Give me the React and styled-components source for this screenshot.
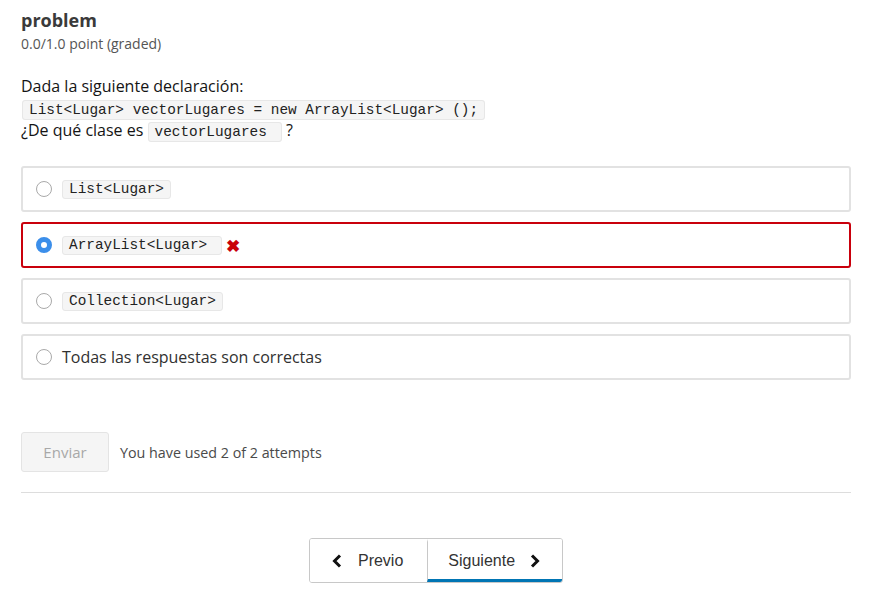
import React from "react";
import styled, { createGlobalStyle } from "styled-components";

const Global = createGlobalStyle`
  html, body { margin: 0; padding: 0; background: #fff; }
  body { font-family: "Open Sans", "Liberation Sans", sans-serif; color: #313131; }
  * { box-sizing: border-box; }
`;

const Page = styled.div`
  padding: 8px 19px 0 21px;
  width: 870px;
`;

const Title = styled.h3`
  margin: 0;
  font-size: 18px;
  font-weight: 700;
  line-height: 24px;
  color: #3a3a3a;
`;

const Score = styled.div`
  font-size: 14px;
  line-height: 18px;
  color: #555;
  margin-top: 3px;
`;

const Prompt = styled.div`
  margin-top: 22px;
  font-size: 16px;
  line-height: 22px;
  color: #141414;
`;

const Code = styled.code`
  font-family: "Liberation Mono", "Courier New", monospace;
  font-size: 14.4px;
  line-height: 15px;
  background: #f5f5f5;
  border: 1px solid #e7e7e7;
  border-radius: 3px;
  padding: 1px ${p => p.$pr || 6}px 1px 6px;
  color: #222;
  white-space: pre;
`;

const CodeLine = styled.div`
  line-height: 17px;
  margin: 3px 0 1px 1px;
`;

const Options = styled.div`
  margin-top: 25px;
  display: flex;
  flex-direction: column;
  gap: 10px;
  width: 830px;
`;

const Option = styled.label`
  display: flex;
  align-items: center;
  height: 46px;
  border: 2px solid ${p => (p.$wrong ? "#c9000c" : "#e2e2e2")};
  border-radius: 3px;
  padding: 0 0 0 13px;
  gap: 10px;
  font-size: 16px;
  color: #313131;
`;

const Radio = styled.span`
  width: 16px;
  height: 16px;
  border-radius: 50%;
  flex: none;
  border: ${p => (p.$checked ? "5px solid #3b8eea" : "1px solid #a9a9a9")};
  background: #fff;
`;

const Cross = styled.span`
  color: #c9000c;
  font-size: 17px;
  font-weight: 700;
  margin-left: -6px;
  line-height: 1;
`;

const SubmitRow = styled.div`
  margin-top: 52px;
  display: flex;
  align-items: center;
  gap: 11px;
`;

const Submit = styled.button`
  width: 88px;
  height: 40px;
  border: 1px solid #e4e4e4;
  background: #f5f5f5;
  border-radius: 3px;
  color: #a8a8a8;
  font-family: "Open Sans", sans-serif;
  font-size: 15px;
`;

const Attempts = styled.span`
  font-size: 14.3px;
  color: #4a4a4a;
`;

const Divider = styled.hr`
  margin: 20px 0 0;
  width: 830px;
  border: none;
  border-top: 1px solid #ddd;
`;

const Nav = styled.div`
  display: flex;
  justify-content: center;
  margin-top: 45px;
  width: 830px;
`;

const NavGroup = styled.div`
  display: flex;
  border: 1px solid #c8c8c8;
  border-radius: 3px;
  overflow: hidden;
`;

const NavButton = styled.button`
  display: flex;
  align-items: center;
  gap: ${p => p.$gap}px;
  height: 43px;
  padding: 0 ${p => p.$pr}px 0 ${p => p.$pl}px;
  background: #fff;
  border: none;
  border-bottom: 3px solid ${p => (p.$active ? "#0075b4" : "transparent")};
  border-top: 3px solid transparent;
  & + & { border-left: 1px solid #c8c8c8; }
  font-family: "Liberation Sans", Arial, sans-serif;
  font-size: 16px;
  color: #333;
`;

const Chevron = ({ dir }) => (
  <svg width="10" height="14" viewBox="0 0 10 14">
    <path
      d={dir === "left" ? "M8 1.5 L2.5 7 L8 12.5" : "M2 1.5 L7.5 7 L2 12.5"}
      fill="none"
      stroke="#111"
      strokeWidth="3"
    />
  </svg>
);

export default function App() {
  return (
    <>
      <Global />
      <Page>
        <Title>problem</Title>
        <Score>0.0/1.0 point (graded)</Score>
        <Prompt>
          Dada la siguiente declaración:
          <CodeLine>
            <Code>List&lt;Lugar&gt; vectorLugares = new ArrayList&lt;Lugar&gt; ();</Code>
          </CodeLine>
          ¿De qué clase es <Code $pr={14}>vectorLugares</Code> ?
        </Prompt>
        <Options>
          <Option>
            <Radio />
            <Code>List&lt;Lugar&gt;</Code>
          </Option>
          <Option $wrong>
            <Radio $checked />
            <Code $pr={14}>ArrayList&lt;Lugar&gt;</Code>
            <Cross>✖</Cross>
          </Option>
          <Option>
            <Radio />
            <Code>Collection&lt;Lugar&gt;</Code>
          </Option>
          <Option>
            <Radio />
            Todas las respuestas son correctas
          </Option>
        </Options>
        <SubmitRow>
          <Submit disabled>Enviar</Submit>
          <Attempts>You have used 2 of 2 attempts</Attempts>
        </SubmitRow>
        <Divider />
        <Nav>
          <NavGroup>
            <NavButton $pl={22} $pr={24} $gap={16}>
              <Chevron dir="left" /> Previo
            </NavButton>
            <NavButton $active $pl={20} $pr={22} $gap={15}>
              Siguiente <Chevron dir="right" />
            </NavButton>
          </NavGroup>
        </Nav>
      </Page>
    </>
  );
}
